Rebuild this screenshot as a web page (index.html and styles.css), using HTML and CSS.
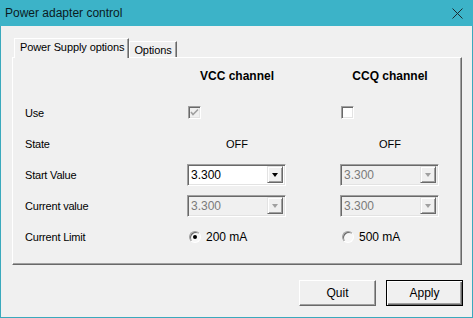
FILE: index.html
```html
<!DOCTYPE html>
<html lang="en">
<head>
  <meta charset="UTF-8" />
  <title>Power adapter control</title>
  <link rel="stylesheet" href="styles.css">
</head>
<body>
  <div class="window">
    <div class="titlebar">
      <span class="title">Power adapter control</span>
      <svg class="close" width="11" height="11" viewBox="0 0 11 11">
        <path d="M0.5 0.5 L10.5 10.5 M10.5 0.5 L0.5 10.5" stroke="#1c2a2e" stroke-width="1" fill="none" />
      </svg>
    </div>
    <div class="client">
      <div class="tabs">
        <div class="tab active">Power Supply options</div>
        <div class="tab">Options</div>
      </div>
      <div class="panel">
        <div class="grid">
          <div></div>
          <div class="head">VCC channel</div>
          <div class="head">CCQ channel</div>

          <div class="label">Use</div>
          <div class="cell"><span class="check disabled">
            <svg width="9" height="9" viewBox="0 0 9 9"><path d="M1 4 L3 6.5 L8 1.5" stroke="#a0a0a0" stroke-width="1.6" fill="none" /></svg>
          </span></div>
          <div class="cell"><span class="check"></span></div>

          <div class="label">State</div>
          <div class="cell"><span class="state">OFF</span></div>
          <div class="cell"><span class="state">OFF</span></div>

          <div class="label">Start Value</div>
          <div class="cell"><div class="combo"><span>3.300</span><span class="drop"><i></i></span></div></div>
          <div class="cell"><div class="combo disabled"><span>3.300</span><span class="drop"><i></i></span></div></div>

          <div class="label">Current value</div>
          <div class="cell"><div class="combo disabled"><span>3.300</span><span class="drop"><i></i></span></div></div>
          <div class="cell"><div class="combo disabled"><span>3.300</span><span class="drop"><i></i></span></div></div>

          <div class="label">Current Limit</div>
          <div class="cell"><span class="radio on"></span><span class="radio-text">200 mA</span></div>
          <div class="cell"><span class="radio"></span><span class="radio-text">500 mA</span></div>
        </div>
      </div>
      <div class="buttons">
        <button class="btn">Quit</button>
        <button class="btn default">Apply</button>
      </div>
    </div>
  </div>
</body>
</html>
```

FILE: styles.css
```css
body {
  margin: 0;
  font-family: 'Liberation Sans', Arial, sans-serif;
  font-size: 11px;
  color: #000;
  background: #f0f0f0;
}
.window {
  width: 473px;
  height: 318px;
  box-sizing: border-box;
  border: 1px solid #3aa9bd;
  border-top: none;
  background: #f0f0f0;
  display: flex;
  flex-direction: column;
}
.titlebar {
  height: 26px;
  margin: 0 -1px;
  background: #3cb3c8;
  display: flex;
  align-items: center;
  justify-content: space-between;
  padding: 0 10px 0 5px;
}
.title {
  font-size: 12px;
  color: #0b1a1e;
}
/* tabs */
.client {
  flex: 1;
  padding: 13px 0 0 11px;
  display: flex;
  flex-direction: column;
}
.tabs {
  display: flex;
  align-items: flex-end;
  height: 18px;
  margin-left: 2px;
  position: relative;
  z-index: 1;
}
.tab {
  height: 16px;
  padding: 1px 4px 0 4px;
  border: 1px solid #fff;
  border-bottom: none;
  border-right: 1px solid #696969;
  box-shadow: inset -1px 0 #a0a0a0;
  display: flex;
  align-items: center;
  box-sizing: border-box;
  background: #f0f0f0;
  letter-spacing: -0.1px;
}
.tab.active {
  height: 20px;
  margin-bottom: -1px;
  padding: 0 4px 3px 5px;
}
.panel {
  width: 450px;
  height: 208px;
  box-sizing: border-box;
  border-top: 1px solid #fff;
  border-left: 1px solid #fff;
  border-right: 1px solid #696969;
  border-bottom: 1px solid #696969;
  box-shadow: inset -1px -1px #a0a0a0;
  padding: 7px 0 0 12px;
}
.grid {
  display: grid;
  grid-template-columns: 162px 153px 1fr;
  grid-template-rows: 32px repeat(5, 31px);
}
.head {
  width: 100px;
  text-align: center;
  font-weight: bold;
  font-size: 12px;
  line-height: 22px;
}
.label, .cell {
  display: flex;
  align-items: center;
}
.label {
  padding-top: 1px;
  letter-spacing: -0.2px;
}
.state {
  width: 100px;
  text-align: center;
}
/* checkbox */
.check {
  width: 13px;
  height: 13px;
  box-sizing: border-box;
  margin-left: 1px;
  margin-top: -1px;
  border-top: 1px solid #a0a0a0;
  border-left: 1px solid #a0a0a0;
  border-right: 1px solid #fff;
  border-bottom: 1px solid #fff;
  box-shadow: inset 1px 1px #696969, inset -1px -1px #e3e3e3;
  background: #fff;
  display: flex;
  align-items: center;
  justify-content: center;
}
.check.disabled {
  background: #f0f0f0;
}
/* combo box */
.combo {
  width: 99px;
  height: 22px;
  box-sizing: border-box;
  border-top: 1px solid #a0a0a0;
  border-left: 1px solid #a0a0a0;
  border-right: 1px solid #fff;
  border-bottom: 1px solid #fff;
  box-shadow: inset 1px 1px #696969, inset -1px -1px #e3e3e3;
  background: #fff;
  display: flex;
  align-items: center;
  justify-content: space-between;
  padding: 2px 2px 2px 3px;
  font-size: 12px;
}
.combo.disabled {
  background: #f0f0f0;
  color: #7a7a7a;
}
.drop {
  width: 16px;
  height: 17px;
  box-sizing: border-box;
  background: #f0f0f0;
  border-top: 1px solid #e3e3e3;
  border-left: 1px solid #e3e3e3;
  border-right: 1px solid #696969;
  border-bottom: 1px solid #696969;
  box-shadow: inset 1px 1px #fff, inset -1px -1px #a0a0a0;
  display: flex;
  align-items: center;
  justify-content: center;
}
.drop i {
  width: 0;
  height: 0;
  border-left: 3.5px solid transparent;
  border-right: 3.5px solid transparent;
  border-top: 4px solid #000;
  margin-top: 1px;
}
.combo.disabled .drop i {
  border-top-color: #a0a0a0;
}
/* radio */
.radio {
  width: 12px;
  height: 12px;
  box-sizing: border-box;
  border-radius: 50%;
  margin-left: 2px;
  border: 1px solid;
  border-color: #a0a0a0 #fff #fff #a0a0a0;
  box-shadow: inset 1px 1px #696969;
  background: #f7f7f7;
  display: flex;
  align-items: center;
  justify-content: center;
}
.radio.on::after {
  content: '';
  width: 4px;
  height: 4px;
  border-radius: 50%;
  background: #000;
}
.radio-text {
  margin-left: 5px;
  font-size: 12px;
}
/* buttons */
.buttons {
  display: flex;
  justify-content: flex-end;
  gap: 10px;
  padding: 15px 9px 0 0;
}
.btn {
  width: 77px;
  height: 26px;
  box-sizing: border-box;
  font-family: 'Liberation Sans', Arial, sans-serif;
  font-size: 12px;
  background: #f0f0f0;
  color: #000;
  border-top: 1px solid #fff;
  border-left: 1px solid #fff;
  border-right: 1px solid #696969;
  border-bottom: 1px solid #696969;
  box-shadow: inset -1px -1px #a0a0a0;
  padding: 0;
}
.btn.default {
  border: 1px solid #000;
  box-shadow: inset 1px 1px #fff, inset -1px -1px #696969, inset -2px -2px #a0a0a0;
}
```
